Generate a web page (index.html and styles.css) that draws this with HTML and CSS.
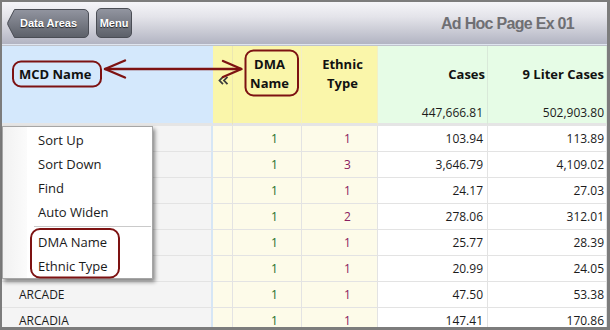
FILE: index.html
```html
<!DOCTYPE html>
<html>
<head>
<meta charset="utf-8">
<link rel="stylesheet" href="styles.css">
</head>
<body>
<div class="frame">
  <div class="toolbar">
    <a class="btn back">
      <svg class="btn-bg" width="82" height="29" viewBox="0 0 82 29">
        <defs>
          <linearGradient id="bg1" x1="0" y1="0" x2="0" y2="1">
            <stop offset="0" stop-color="#9295a0"/>
            <stop offset="1" stop-color="#5c6069"/>
          </linearGradient>
        </defs>
        <path d="M7.5,0.5 H77 A4.5,4.5 0 0 1 81.5,5 V24 A4.5,4.5 0 0 1 77,28.5 H7.5 L1,16 Q0.3,14.5 1,13 Z" fill="url(#bg1)" stroke="#4a4d55" stroke-width="1"/>
      </svg>
      <span class="btn-label">Data Areas</span>
    </a>
    <a class="btn menu-btn"><span class="btn-label">Menu</span></a>
    <div class="title">Ad Hoc Page Ex 01</div>
  </div>

  <div class="grid">
    <div class="hcell h-mcd"><div class="htitle">MCD Name</div><div class="htotal"></div></div>
    <div class="hcell h-chev">
      <svg width="11" height="9" viewBox="0 0 11 9"><path d="M5,0.8 L1.5,4.5 L5,8.2 M9.5,0.8 L6,4.5 L9.5,8.2" fill="none" stroke="#3c3c3c" stroke-width="1.8"/></svg>
    </div>
    <div class="hcell h-dma"><div class="htitle">DMA<br>Name</div><div class="htotal"></div></div>
    <div class="hcell h-eth"><div class="htitle">Ethnic<br>Type</div><div class="htotal"></div></div>
    <div class="hcell h-cases"><div class="htitle">Cases</div><div class="htotal">447,666.81</div></div>
    <div class="hcell h-liter"><div class="htitle">9 Liter Cases</div><div class="htotal">502,903.80</div></div>

    <div class="cell c-mcd"></div><div class="cell c-chev"></div><div class="cell c-dma">1</div><div class="cell c-eth">1</div><div class="cell c-num">103.94</div><div class="cell c-num last">113.89</div>
    <div class="cell c-mcd"></div><div class="cell c-chev"></div><div class="cell c-dma">1</div><div class="cell c-eth">3</div><div class="cell c-num">3,646.79</div><div class="cell c-num last">4,109.02</div>
    <div class="cell c-mcd"></div><div class="cell c-chev"></div><div class="cell c-dma">1</div><div class="cell c-eth">1</div><div class="cell c-num">24.17</div><div class="cell c-num last">27.03</div>
    <div class="cell c-mcd"></div><div class="cell c-chev"></div><div class="cell c-dma">1</div><div class="cell c-eth">2</div><div class="cell c-num">278.06</div><div class="cell c-num last">312.01</div>
    <div class="cell c-mcd"></div><div class="cell c-chev"></div><div class="cell c-dma">1</div><div class="cell c-eth">1</div><div class="cell c-num">25.77</div><div class="cell c-num last">28.39</div>
    <div class="cell c-mcd"></div><div class="cell c-chev"></div><div class="cell c-dma">1</div><div class="cell c-eth">1</div><div class="cell c-num">20.99</div><div class="cell c-num last">24.05</div>
    <div class="cell c-mcd">ARCADE</div><div class="cell c-chev"></div><div class="cell c-dma">1</div><div class="cell c-eth">1</div><div class="cell c-num">47.50</div><div class="cell c-num last">53.38</div>
    <div class="cell c-mcd">ARCADIA</div><div class="cell c-chev"></div><div class="cell c-dma">1</div><div class="cell c-eth">1</div><div class="cell c-num">147.41</div><div class="cell c-num last">170.86</div>
  </div>
</div>

<div class="ctx-menu">
  <div class="mi">Sort Up</div>
  <div class="mi">Sort Down</div>
  <div class="mi">Find</div>
  <div class="mi">Auto Widen</div>
  <div class="msep"></div>
  <div class="mi">DMA Name</div>
  <div class="mi">Ethnic Type</div>
</div>

<svg class="annot" width="610" height="330" viewBox="0 0 610 330">
  <g fill="none" stroke="#7d1212" stroke-width="2">
    <rect x="13" y="61.5" width="88" height="25" rx="8"/>
    <rect x="245.5" y="50.5" width="52.5" height="45" rx="8"/>
    <rect x="31" y="229" width="88" height="48.5" rx="9"/>
  </g>
  <g fill="none" stroke="#7d1212" stroke-width="2.4" stroke-linecap="round" stroke-linejoin="round">
    <path d="M105,69 H241"/>
    <path d="M125,60.5 L105,69 L125,77.5"/>
    <path d="M223,61 L241.5,69 L223,77"/>
  </g>
</svg>
</body>
</html>
```

FILE: styles.css
```css
html, body {
  margin: 0;
  padding: 0;
}
body {
  position: relative;
  width: 610px;
  height: 330px;
  overflow: hidden;
  font-family: "Open Sans", "Noto Sans", sans-serif;
  background: #ffffff;
}
.frame {
  box-sizing: border-box;
  width: 610px;
  height: 330px;
  border-style: solid;
  border-color: #7c7c7c;
  border-width: 2px 3px 3px 2px;
  overflow: hidden;
  background: #ffffff;
}

/* toolbar */
.toolbar {
  box-sizing: border-box;
  height: 43px;
  display: flex;
  align-items: center;
  padding: 0 33px 0 5px;
  background: linear-gradient(#f5f5f9 0%, #e4e4ea 35%, #b2b4c2 100%);
  border-bottom: 1px solid #dfe5ef;
}
.btn {
  position: relative;
  box-sizing: border-box;
  height: 29px;
  display: inline-flex;
  align-items: center;
  font-family: "Liberation Sans", Arial, sans-serif;
  font-weight: bold;
  font-size: 11px;
  color: #ffffff;
  text-shadow: 0 1px 1px rgba(0, 0, 0, 0.7);
}
.btn-label {
  position: relative;
}
.back {
  width: 82px;
  padding-left: 13px;
}
.btn-bg {
  position: absolute;
  left: 0;
  top: 0;
}
.menu-btn {
  width: 36px;
  margin-left: 7px;
  justify-content: center;
  border: 1px solid #4a4d55;
  border-radius: 5px;
  background: linear-gradient(#9295a0, #5c6069);
  height: 30px;
}
.title {
  margin-left: auto;
  font-family: "Liberation Sans", Arial, sans-serif;
  font-weight: bold;
  font-size: 16px;
  letter-spacing: -0.7px;
  color: #6f6f73;
  padding-top: 2px;
}

/* grid */
.grid {
  display: grid;
  grid-template-columns: 211px 20px 69px 76px 110px 119px;
  grid-template-rows: 80px repeat(8, 26px);
  border-top: 1px solid #bfc3cc;
  font-size: 12px;
  color: #1b1b1b;
}
.hcell {
  box-sizing: border-box;
  display: flex;
  flex-direction: column;
  border-bottom: 3px solid #e5e5e5;
  border-right: 1px solid transparent;
  font-weight: bold;
  font-size: 13px;
  color: #111111;
}
.htitle {
  height: 56px;
  display: flex;
  align-items: center;
  line-height: 19px;
}
.htotal {
  height: 21px;
  line-height: 21px;
  font-weight: normal;
  font-size: 12px;
  color: #1b1b1b;
  text-align: right;
  padding-right: 4px;
}
.h-mcd {
  background: #d4e8fc;
  border-right-color: #d4e8fc;
}
.h-mcd .htitle {
  padding-left: 17px;
}
.h-chev {
  background: #faf6aa;
  border-right-color: #ebe7b2;
  padding: 30px 0 0 5px;
}
.h-chev svg {
  display: block;
}
.h-dma, .h-eth {
  background: #faf6aa;
  border-right-color: #f3efc6;
}
.h-dma .htitle, .h-eth .htitle {
  justify-content: center;
  text-align: center;
}
.h-dma .htitle {
  padding-left: 5px;
}
.h-eth .htitle {
  padding-left: 6px;
}
.h-cases, .h-liter {
  background: #e6fce6;
  border-right-color: #d9e9d9;
}
.h-cases .htitle, .h-liter .htitle {
  justify-content: flex-end;
  padding-right: 2px;
}
.h-liter .htotal {
  padding-right: 2px;
}

.cell {
  box-sizing: border-box;
  height: 26px;
  line-height: 25px;
  border-bottom: 1px solid #e3e3e3;
  border-right: 1px solid #e3e3e3;
  white-space: nowrap;
  overflow: hidden;
}
.c-mcd {
  background: #f4f4f4;
  padding-left: 17px;
  border-right: 2px solid #d6e6f5;
}
.c-chev {
  background: #fdfbe9;
}
.c-dma, .c-eth {
  background: #fdfbe9;
  text-align: center;
}
.c-dma {
  padding-left: 15px;
  color: #24702a;
}
.c-eth {
  padding-left: 16px;
  color: #8a2060;
}
.c-num {
  background: #ffffff;
  text-align: right;
  padding-right: 4px;
}
.c-num.last {
  padding-right: 2px;
}

/* context menu */
.ctx-menu {
  position: absolute;
  left: 2px;
  top: 126px;
  box-sizing: border-box;
  width: 151px;
  height: 153px;
  padding-top: 1px;
  border: 1px solid #a6a6a6;
  background: linear-gradient(90deg, #f1f1f1 0px, #fbfbfb 24px, #ffffff 24px);
  box-shadow: 2px 3px 4px rgba(0, 0, 0, 0.45);
  font-size: 13px;
  color: #1a1a1a;
}
.mi {
  height: 24px;
  line-height: 24px;
  padding-left: 35px;
}
.msep {
  height: 6px;
  margin-left: 31px;
  margin-right: 1px;
  background: linear-gradient(#ffffff 2px, #cacaca 2px, #cacaca 3px, #ffffff 3px);
}

/* annotations */
.annot {
  position: absolute;
  left: 0;
  top: 0;
  pointer-events: none;
}
```
